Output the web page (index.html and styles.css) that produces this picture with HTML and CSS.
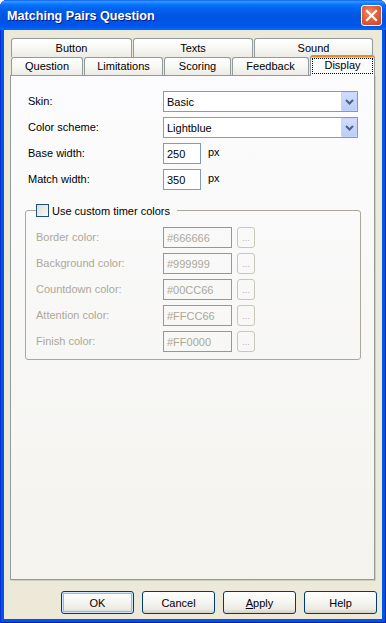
FILE: index.html
```html
<!DOCTYPE html>
<html lang="en">
<head>
  <meta charset="UTF-8" />
  <title>Matching Pairs Question</title>
  <link rel="stylesheet" href="styles.css">
</head>
<body>
  <div class="window">
    <!-- Title bar -->
    <div class="titlebar">
      <span class="title">Matching Pairs Question</span>
      <div class="close-btn">
        <svg width="19" height="19" viewBox="0 0 19 19">
          <path d="M5 5 L14 14 M14 5 L5 14" stroke="#fff" stroke-width="2.2" stroke-linecap="square" fill="none"/>
        </svg>
      </div>
    </div>

    <div class="client">
      <!-- Tabs -->
      <div class="tabs">
        <div class="tab-row back">
          <div class="tab w-button">Button</div>
          <div class="tab w-texts">Texts</div>
          <div class="tab w-sound">Sound</div>
        </div>
        <div class="tab-row front">
          <div class="tab w-question">Question</div>
          <div class="tab w-limits">Limitations</div>
          <div class="tab w-scoring">Scoring</div>
          <div class="tab w-feedback">Feedback</div>
          <div class="tab active w-display"><span class="focus">Display</span></div>
        </div>
      </div>

      <!-- Display panel -->
      <div class="panel">
        <div class="field">
          <span class="field-label">Skin:</span>
          <div class="select">
            <span class="select-text">Basic</span>
            <span class="drop">
              <svg width="9" height="6" viewBox="0 0 9 6"><path d="M1 1 L4.5 4.5 L8 1" stroke="#4D6185" stroke-width="2" fill="none"/></svg>
            </span>
          </div>
        </div>
        <div class="field">
          <span class="field-label">Color scheme:</span>
          <div class="select">
            <span class="select-text">Lightblue</span>
            <span class="drop">
              <svg width="9" height="6" viewBox="0 0 9 6"><path d="M1 1 L4.5 4.5 L8 1" stroke="#4D6185" stroke-width="2" fill="none"/></svg>
            </span>
          </div>
        </div>
        <div class="field">
          <span class="field-label">Base width:</span>
          <div class="textbox small">250</div>
          <span class="unit">px</span>
        </div>
        <div class="field">
          <span class="field-label">Match width:</span>
          <div class="textbox small">350</div>
          <span class="unit">px</span>
        </div>

        <fieldset class="group">
          <legend class="group-title">
            <span class="checkbox"></span>
            <span class="check-label">Use custom timer colors</span>
          </legend>
          <div class="color-row">
            <span class="color-label">Border color:</span>
            <div class="textbox color disabled">#666666</div>
            <div class="dots">...</div>
          </div>
          <div class="color-row">
            <span class="color-label">Background color:</span>
            <div class="textbox color disabled">#999999</div>
            <div class="dots">...</div>
          </div>
          <div class="color-row">
            <span class="color-label">Countdown color:</span>
            <div class="textbox color disabled">#00CC66</div>
            <div class="dots">...</div>
          </div>
          <div class="color-row">
            <span class="color-label">Attention color:</span>
            <div class="textbox color disabled">#FFCC66</div>
            <div class="dots">...</div>
          </div>
          <div class="color-row">
            <span class="color-label">Finish color:</span>
            <div class="textbox color disabled">#FF0000</div>
            <div class="dots">...</div>
          </div>
        </fieldset>
      </div>

      <!-- Dialog buttons -->
      <div class="buttons">
        <div class="btn default">OK</div>
        <div class="btn">Cancel</div>
        <div class="btn"><span><u>A</u>pply</span></div>
        <div class="btn">Help</div>
      </div>
    </div>
  </div>
</body>
</html>
```

FILE: styles.css
```css
* {
  margin: 0;
  padding: 0;
  box-sizing: border-box;
}

body {
  width: 386px;
  height: 623px;
  overflow: hidden;
  background: #ffffff;
  font-family: 'Liberation Sans', Arial, sans-serif;
  font-size: 11px;
  color: #000;
}

/* Window frame */
.window {
  height: 623px;
  display: flex;
  flex-direction: column;
  background: #0055e5;
  border-radius: 7px 7px 0 0;
  overflow: hidden;
  box-shadow: inset 1px 0 #0831d9, inset -1px 0 #001ea0, inset 0 -1px #001ea0;
}

.titlebar {
  height: 30px;
  display: flex;
  align-items: center;
  padding: 0 4px 0 7px;
  background: linear-gradient(to bottom,
    #0058ee 0%, #3a93ff 4%, #288eff 8%, #127dff 12%, #036ffc 18%,
    #0262ee 30%, #0057e5 50%, #0054e3 70%, #0055eb 85%, #005bf5 92%,
    #026afe 96%, #0062ef 100%);
}

.title {
  flex: 1;
  color: #fff;
  font-weight: bold;
  font-size: 12.6px;
  text-shadow: 1px 1px 0 #0a1883;
  padding-top: 1px;
}

.close-btn {
  width: 21px;
  height: 21px;
  border: 1px solid #fff;
  border-radius: 3px;
  background: radial-gradient(circle at 40% 35%, #ec8f6f 0%, #e0603c 45%, #c84324 100%);
  display: flex;
  align-items: center;
  justify-content: center;
}

/* Client area */
.client {
  flex: 1;
  margin: 0 4px 4px;
  background: #ece9d8;
  padding: 8px 7px 5px 6px;
  display: flex;
  flex-direction: column;
}

/* Tabs */
.tabs {
  padding-left: 1px;
}

.tab-row {
  display: flex;
  gap: 1px;
}

.tab-row.back {
  height: 19px;
}

.tab-row.front {
  height: 18px;
  align-items: flex-end;
}

.tab {
  height: 100%;
  border: 1px solid #919b9c;
  border-bottom: 0;
  border-radius: 3px 3px 0 0;
  background: linear-gradient(#ffffff, #f7f7f4 50%, #ecebe5);
  display: flex;
  align-items: center;
  justify-content: center;
}

.tab-row.front .tab {
  padding-bottom: 2px;
}

.tab-row.front .tab.active {
  position: relative;
  z-index: 1;
  height: 21px;
  margin-bottom: -1px;
  border-top: 2px solid #e68b2c;
  box-shadow: inset 0 1px #ffc83c;
  background: #fcfcfe;
  align-items: flex-start;
  padding: 1px 0 0;
}

.focus {
  display: block;
  width: calc(100% - 2px);
  height: 16px;
  line-height: 12px;
  border: 1px dotted #000;
  text-align: center;
}

.w-button { width: 121px; }
.w-texts { width: 120px; }
.w-sound { width: 119px; }
.w-question { width: 72px; }
.w-limits { width: 79px; }
.w-scoring { width: 67px; }
.w-feedback { width: 77px; }
.w-display { width: 65px; }

/* Tab panel */
.panel {
  flex: 1;
  border: 1px solid #919b9c;
  background: linear-gradient(#fcfcfe, #f4f3ee);
  box-shadow: 1px 1px 0 #d0cebf;
  padding: 15px 13px 0 14px;
}

.field {
  display: flex;
  align-items: center;
  height: 21px;
  margin-bottom: 5px;
  padding-left: 3px;
}

.field-label {
  width: 135px;
  padding-bottom: 2px;
}

.select {
  width: 195px;
  height: 21px;
  border: 1px solid #7f9db9;
  background: #fff;
  display: flex;
  align-items: center;
  padding-left: 3px;
}

.select-text {
  flex: 1;
}

.drop {
  width: 16px;
  height: 19px;
  border-radius: 2px;
  background: linear-gradient(#d2defd, #b9cdf8);
  box-shadow: inset 0 0 0 1px #c3d3fd;
  display: flex;
  align-items: center;
  justify-content: center;
}

.textbox {
  height: 21px;
  border: 1px solid #7f9db9;
  background: #fff;
  display: flex;
  align-items: center;
  padding-left: 3px;
}

.textbox.small {
  width: 38px;
}

.textbox.color {
  width: 69px;
}

.textbox.disabled {
  background: transparent;
  color: #aca899;
}

.unit {
  margin-left: 7px;
  padding-bottom: 4px;
}

/* Timer colors group */
.group {
  margin-top: 14px;
  border: 1px solid #aca899;
  border-radius: 3px;
  padding: 10px 0 7px 10px;
}

.group-title {
  display: flex;
  align-items: center;
  height: 13px;
  padding-right: 7px;
}

.checkbox {
  width: 13px;
  height: 13px;
  border: 1px solid #1c5180;
  background: linear-gradient(135deg, #dcdcd7, #f5f5f2 80%, #ffffff);
}

.check-label {
  margin-left: 3px;
}

.color-row {
  display: flex;
  align-items: center;
  height: 21px;
  margin-bottom: 5px;
}

.color-row:last-child {
  margin-bottom: 0;
}

.color-label {
  width: 127px;
  color: #aca899;
  padding-bottom: 1px;
}

.dots {
  width: 18px;
  height: 21px;
  margin-left: 5px;
  border: 1px solid #c9c7ba;
  border-radius: 3px;
  color: #c4a8a0;
  font-size: 9px;
  text-align: center;
  line-height: 20px;
}

/* Dialog buttons */
.buttons {
  display: flex;
  justify-content: flex-end;
  gap: 8px;
  margin-top: 11px;
  margin-right: -2px;
}

.btn {
  width: 73px;
  height: 23px;
  border: 1px solid #003c74;
  border-radius: 3px;
  background: linear-gradient(#ffffff, #f5f5f1 45%, #ecebe6 80%, #d6d0c5);
  display: flex;
  align-items: center;
  justify-content: center;
}

.btn.default {
  box-shadow: inset 0 0 0 1px #cee7ff, inset 0 0 0 2px #98b8ea;
}
```
